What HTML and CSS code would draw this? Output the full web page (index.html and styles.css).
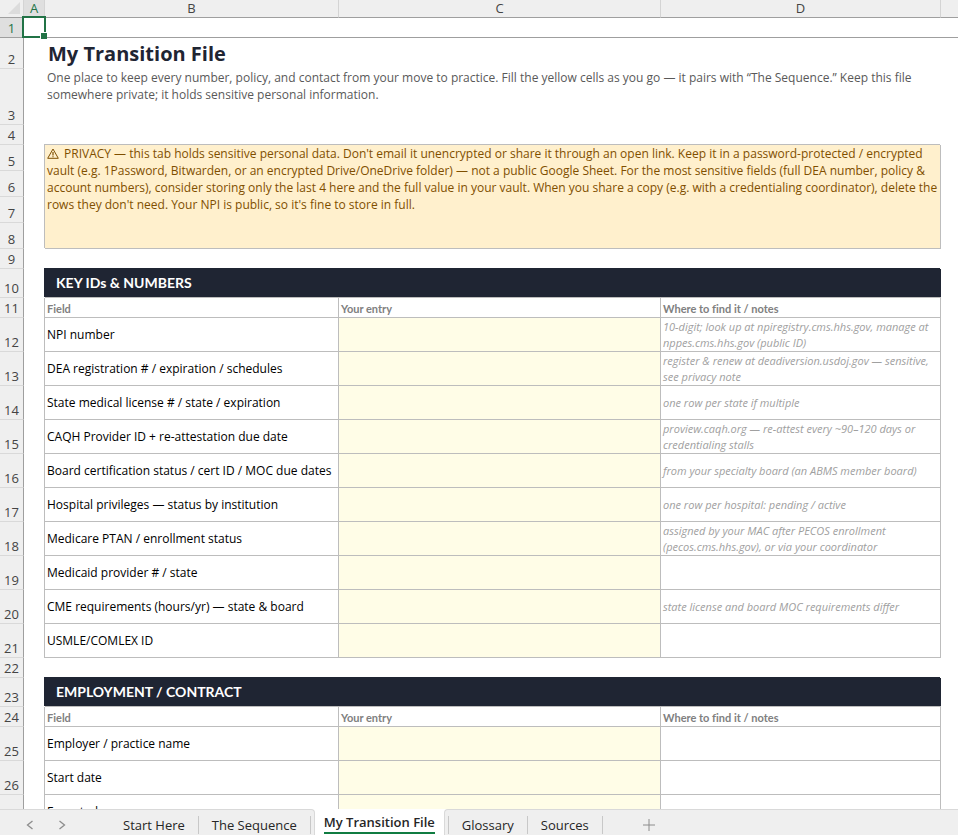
FILE: index.html
```html
<!DOCTYPE html>
<html lang="en">
<head>
  <meta charset="UTF-8">
  <meta name="viewport" content="width=device-width, initial-scale=1.0">
  <title>My Transition File</title>
  <link rel="stylesheet" href="styles.css">
</head>
<body>
  <main class="sheet">
    <table class="grid">
      <colgroup>
        <col class="col-num">
        <col class="col-a">
        <col class="col-b">
        <col class="col-c">
        <col class="col-d">
        <col>
      </colgroup>
      <thead>
        <tr class="letters">
          <th class="corner">
            <svg width="12" height="12" viewBox="0 0 12 12" aria-hidden="true"><path d="M12 0v12H0z" fill="#dcdcdc"/></svg>
          </th>
          <th class="current">A</th>
          <th>B</th>
          <th>C</th>
          <th>D</th>
          <th></th>
        </tr>
      </thead>
      <tbody>
        <!-- Frozen first row -->
        <tr class="h20 frozen"><th class="current">1</th><td class="selected"><span class="selection"></span></td><td></td><td></td><td></td><td></td></tr>

        <!-- Title and intro -->
        <tr class="h31"><th>2</th><td></td><td colspan="3"><h1>My Transition File</h1></td><td></td></tr>
        <tr class="h56"><th>3</th><td></td><td colspan="3" class="intro">One place to keep every number, policy, and contact from your move to practice. Fill the yellow cells as you go — it pairs with “The Sequence.” Keep this file somewhere private; it holds sensitive personal information.</td><td></td></tr>
        <tr class="h20"><th>4</th><td></td><td colspan="3"></td><td></td></tr>

        <!-- Privacy note -->
        <tr class="h26"><th>5</th><td></td>
          <td colspan="3" rowspan="4" class="privacy"><svg class="warn" width="12" height="11" viewBox="0 0 12 11" aria-hidden="true"><path d="M6 1 11.300 10.300H.7z" fill="none" stroke="#7f4f00" stroke-linejoin="round"/><path d="M6 4v3.500M6 8.300v1" stroke="#7f4f00" stroke-width="1.200"/></svg>PRIVACY — this tab holds sensitive personal data. Don't email it unencrypted or share it through an open link. Keep it in a password-protected / encrypted vault (e.g. 1Password, Bitwarden, or an encrypted Drive/OneDrive folder) — not a public Google Sheet. For the most sensitive fields (full DEA number, policy &amp; account numbers), consider storing only the last 4 here and the full value in your vault. When you share a copy (e.g. with a credentialing coordinator), delete the rows they don't need. Your NPI is public, so it's fine to store in full.</td>
          <td></td></tr>
        <tr class="h26"><th>6</th><td></td><td></td></tr>
        <tr class="h26"><th>7</th><td></td><td></td></tr>
        <tr class="h26"><th>8</th><td></td><td></td></tr>
        <tr class="h20"><th>9</th><td></td><td colspan="3"></td><td></td></tr>

        <!-- Key IDs -->
        <tr class="h29"><th>10</th><td></td><td colspan="3" class="section"><h2>KEY IDs &amp; NUMBERS</h2></td><td></td></tr>
        <tr class="h20 labels"><th>11</th><td></td><td class="box">Field</td><td class="box">Your entry</td><td class="box">Where to find it / notes</td><td></td></tr>
        <tr class="h34"><th>12</th><td></td><td class="box"><label for="npi">NPI number</label></td><td class="box entry"><input id="npi" type="text"></td><td class="box note">10-digit; look up at npiregistry.cms.hhs.gov, manage at nppes.cms.hhs.gov (public ID)</td><td></td></tr>
        <tr class="h34"><th>13</th><td></td><td class="box"><label for="dea">DEA registration # / expiration / schedules</label></td><td class="box entry"><input id="dea" type="text"></td><td class="box note">register &amp; renew at deadiversion.usdoj.gov — sensitive, see privacy note</td><td></td></tr>
        <tr class="h34"><th>14</th><td></td><td class="box"><label for="license">State medical license # / state / expiration</label></td><td class="box entry"><input id="license" type="text"></td><td class="box note">one row per state if multiple</td><td></td></tr>
        <tr class="h34"><th>15</th><td></td><td class="box"><label for="caqh">CAQH Provider ID + re-attestation due date</label></td><td class="box entry"><input id="caqh" type="text"></td><td class="box note">proview.caqh.org — re-attest every ~90–120 days or credentialing stalls</td><td></td></tr>
        <tr class="h34"><th>16</th><td></td><td class="box"><label for="board">Board certification status / cert ID / MOC due dates</label></td><td class="box entry"><input id="board" type="text"></td><td class="box note">from your specialty board (an ABMS member board)</td><td></td></tr>
        <tr class="h34"><th>17</th><td></td><td class="box"><label for="hospital">Hospital privileges — status by institution</label></td><td class="box entry"><input id="hospital" type="text"></td><td class="box note">one row per hospital: pending / active</td><td></td></tr>
        <tr class="h34"><th>18</th><td></td><td class="box"><label for="medicare">Medicare PTAN / enrollment status</label></td><td class="box entry"><input id="medicare" type="text"></td><td class="box note">assigned by your MAC after PECOS enrollment (pecos.cms.hhs.gov), or via your coordinator</td><td></td></tr>
        <tr class="h34"><th>19</th><td></td><td class="box"><label for="medicaid">Medicaid provider # / state</label></td><td class="box entry"><input id="medicaid" type="text"></td><td class="box note"></td><td></td></tr>
        <tr class="h34"><th>20</th><td></td><td class="box"><label for="cme">CME requirements (hours/yr) — state &amp; board</label></td><td class="box entry"><input id="cme" type="text"></td><td class="box note">state license and board MOC requirements differ</td><td></td></tr>
        <tr class="h34"><th>21</th><td></td><td class="box"><label for="usmle">USMLE/COMLEX ID</label></td><td class="box entry"><input id="usmle" type="text"></td><td class="box note"></td><td></td></tr>
        <tr class="h20"><th>22</th><td></td><td colspan="3"></td><td></td></tr>

        <!-- Employment -->
        <tr class="h29"><th>23</th><td></td><td colspan="3" class="section"><h2>EMPLOYMENT / CONTRACT</h2></td><td></td></tr>
        <tr class="h20 labels"><th>24</th><td></td><td class="box">Field</td><td class="box">Your entry</td><td class="box">Where to find it / notes</td><td></td></tr>
        <tr class="h34"><th>25</th><td></td><td class="box"><label for="employer">Employer / practice name</label></td><td class="box entry"><input id="employer" type="text"></td><td class="box note"></td><td></td></tr>
        <tr class="h34"><th>26</th><td></td><td class="box"><label for="start">Start date</label></td><td class="box entry"><input id="start" type="text"></td><td class="box note"></td><td></td></tr>
        <tr class="h34"><th></th><td></td><td class="box"><label for="expected">Expected</label></td><td class="box entry"><input id="expected" type="text"></td><td class="box note"></td><td></td></tr>
      </tbody>
    </table>
  </main>

  <nav class="tabs" aria-label="Sheets">
    <div class="tabs-left">
      <button class="arrow" aria-label="Previous sheet"><svg width="8" height="10" viewBox="0 0 8 10"><path d="M6.500 1 1.500 5l5 4" fill="none" stroke="#8c8c8c" stroke-width="1.300"/></svg></button>
      <button class="arrow" aria-label="Next sheet"><svg width="8" height="10" viewBox="0 0 8 10"><path d="M1.500 1l5 4-5 4" fill="none" stroke="#8c8c8c" stroke-width="1.300"/></svg></button>
      <button class="tab first">Start Here</button>
      <button class="tab">The Sequence</button>
    </div>
    <button class="tab-active"><span>My Transition File</span></button>
    <div class="tabs-right">
      <button class="tab">Glossary</button>
      <button class="tab">Sources</button>
      <button class="add" aria-label="New sheet"><svg width="12" height="12" viewBox="0 0 12 12"><path d="M6 0v12M0 6h12" stroke="#8c8c8c"/></svg></button>
    </div>
  </nav>
</body>
</html>
```
FILE: styles.css
```css
* {
  box-sizing: border-box;
}

body {
  margin: 0;
  height: 100vh;
  display: flex;
  flex-direction: column;
  background-color: #fff;
  font-family: "Open Sans", sans-serif;
  font-size: 12px;
  line-height: 17px;
  color: #000;
}

.sheet {
  flex: 1;
  min-height: 0;
  overflow: hidden;
}

.grid {
  width: 100%;
  table-layout: fixed;
  border-collapse: separate;
  border-spacing: 0;
}

.col-num { width: 24px; }
.col-a { width: 21px; }
.col-b { width: 294px; }
.col-c { width: 322px; }
.col-d { width: 280px; }

td {
  padding: 0 2px;
  vertical-align: middle;
}

.h20 { height: 20px; }
.h26 { height: 26px; }
.h29 { height: 29px; }
.h31 { height: 31px; }
.h34 { height: 34px; }
.h56 { height: 56px; }

/* Row and column headers */
th {
  padding: 0;
  background-color: #efefef;
  border-right: 1px solid #9f9f9f;
  border-bottom: 1px solid #d9d9d9;
  font-size: 13px;
  font-weight: normal;
  line-height: 17px;
  color: #444;
  vertical-align: bottom;
}

.letters {
  height: 18px;
}

.letters th {
  border-right-color: #d4d4d4;
  border-bottom-color: #9f9f9f;
}

.letters th:last-child {
  border-right: none;
}

.letters .corner {
  padding: 2px 3px 0 0;
  text-align: right;
  line-height: 0;
  vertical-align: top;
}

.letters .current,
th.current {
  background-color: #dfdfdf;
  color: #217346;
}

.frozen th,
.frozen td {
  border-bottom: 1px solid #9f9f9f;
}

.selected {
  position: relative;
}

.selection {
  position: absolute;
  top: -2px;
  right: -1px;
  bottom: -1px;
  left: -2px;
  border: 2px solid #217346;
}

.selection::after {
  content: "";
  position: absolute;
  right: -3px;
  bottom: -3px;
  width: 6px;
  height: 6px;
  background-color: #217346;
  border-top: 1px solid #fff;
  border-left: 1px solid #fff;
}

/* Cell contents */
h1 {
  margin: 0;
  padding-left: 1px;
  font-size: 20px;
  font-weight: bold;
  line-height: 28px;
  color: #1f2533;
}

.intro {
  color: #595959;
  vertical-align: top;
}

.privacy {
  background-color: #fff0cd;
  border-right: 1px solid #bdbdbd;
  border-bottom: 1px solid #bdbdbd;
  box-shadow: -1px -1px 0 #bdbdbd;
  color: #7f4f00;
  vertical-align: top;
}

.warn {
  margin-right: 5px;
  vertical-align: -1px;
}

.section {
  background-color: #1f2533;
  border-bottom: 1px solid #bdbdbd;
  box-shadow: -1px -1px 0 #1f2533;
}

h2 {
  margin: 0;
  padding-left: 9px;
  font-family: Lato, sans-serif;
  font-size: 14px;
  line-height: 20px;
  color: #fff;
}

.box {
  border-right: 1px solid #bdbdbd;
  border-bottom: 1px solid #bdbdbd;
  box-shadow: -1px 0 0 #bdbdbd;
}

.labels .box {
  font-family: Lato, sans-serif;
  font-size: 11px;
  font-weight: bold;
  font-variant-ligatures: none;
  line-height: 16px;
  color: #808080;
  vertical-align: bottom;
}

.entry {
  padding: 0;
  background-color: #fffde7;
}

.entry input {
  display: block;
  width: 100%;
  height: 32px;
  padding: 0 2px;
  border: none;
  background: transparent;
  font: inherit;
}

.note {
  font-size: 11px;
  font-style: italic;
  line-height: 16px;
  color: #a0a0a0;
}

/* Sheet tabs */
.tabs {
  display: flex;
  height: 26px;
  background-color: #fff;
}

.tabs button {
  border: none;
  background: transparent;
  font-family: "Open Sans", sans-serif;
  font-size: 13px;
  line-height: 18px;
  color: #262626;
  white-space: nowrap;
}

.tabs-left,
.tabs-right {
  display: flex;
  align-items: flex-end;
  background-color: #efefef;
  border-top: 1px solid #d9d9d9;
}

.tabs-left {
  padding: 0 3px 0 14px;
  border-right: 1px solid #d9d9d9;
  border-top-right-radius: 4px;
}

.tabs-right {
  flex: 1;
  padding-left: 3px;
  border-left: 1px solid #d9d9d9;
  border-top-left-radius: 4px;
}

.tabs .arrow {
  width: 32px;
  height: 20px;
  padding: 0;
}

.tabs .tab {
  padding: 0 13px;
  margin-bottom: 1px;
  border-right: 1px solid #c8c8c8;
}

.tabs-right .tab:first-child {
  border-left: 1px solid #c8c8c8;
}

.tabs .first {
  margin-left: 32px;
}

.tabs .tab-active {
  padding: 3px 9px 0;
  font-weight: 600;
}

.tab-active span {
  display: block;
  height: 21px;
  border-bottom: 2px solid #107c41;
}

.tabs .add {
  margin-left: 40px;
  padding: 0;
  height: 18px;
}
```
